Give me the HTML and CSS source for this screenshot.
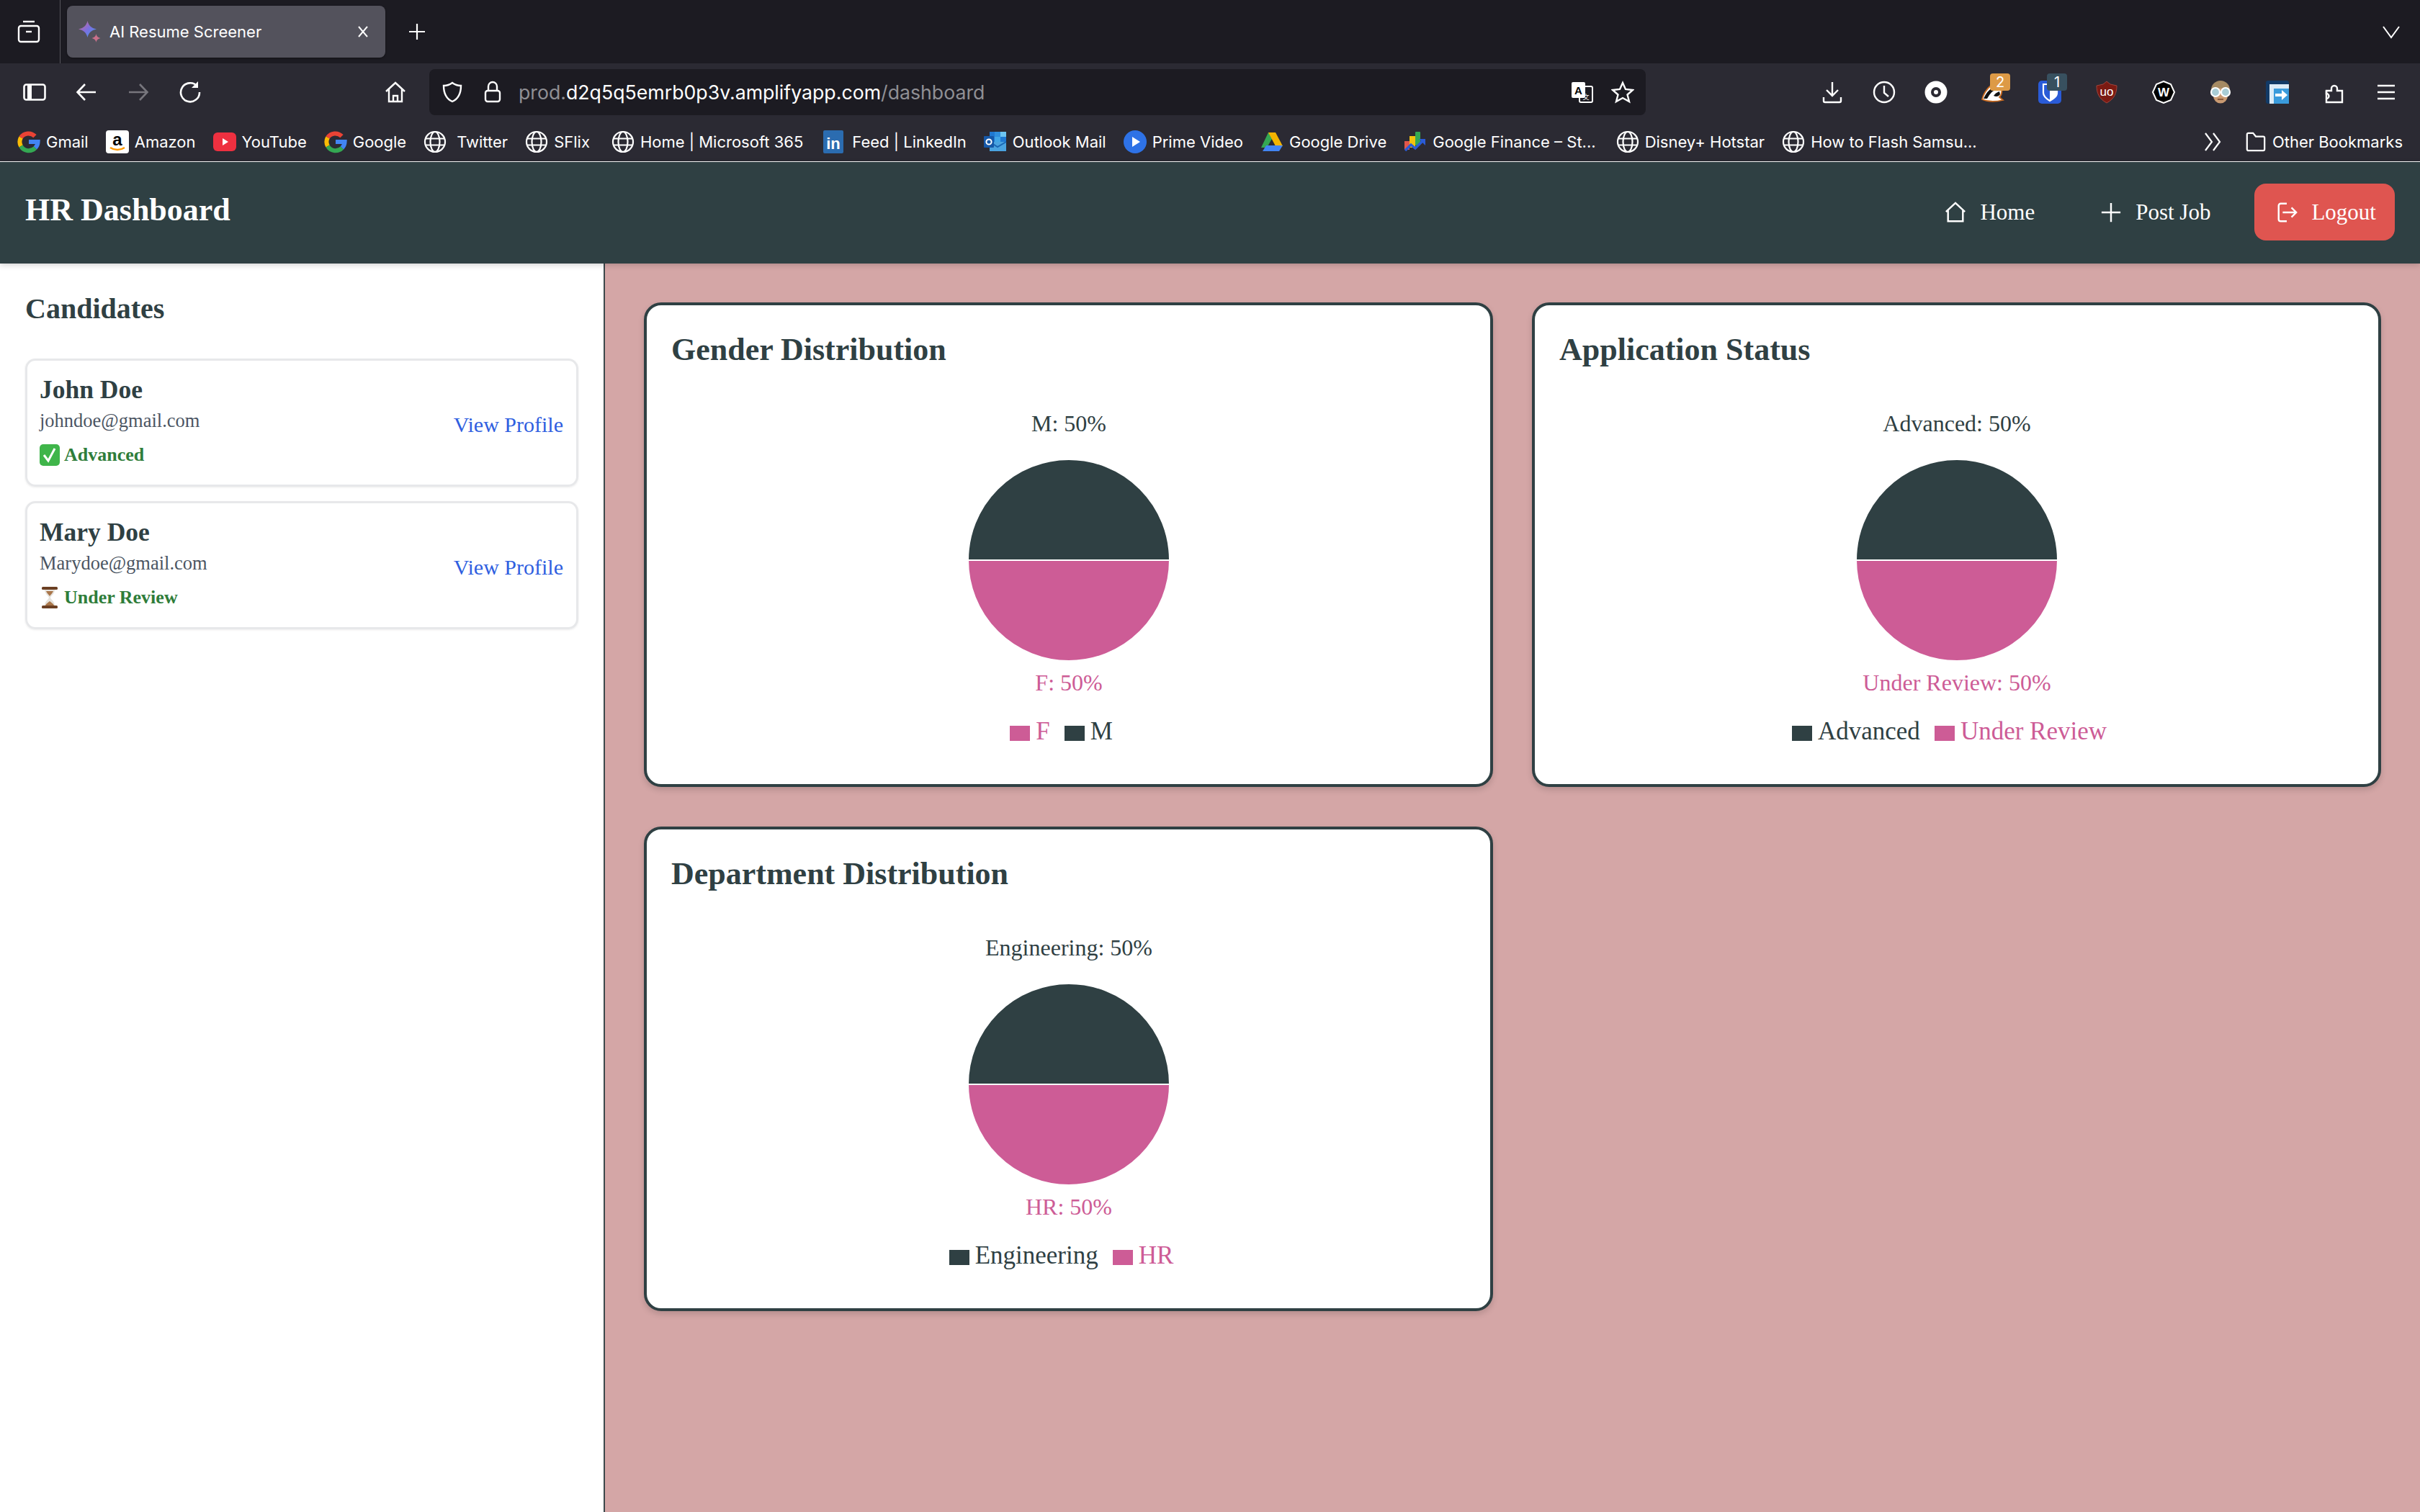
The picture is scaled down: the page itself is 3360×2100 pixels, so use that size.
FILE: index.html
```html
<!DOCTYPE html>
<html lang="en">
<head>
    <meta charset="UTF-8">
    <title>AI Resume Screener</title>
    <link rel="stylesheet" href="styles.css">
</head>
<body>
    <!-- Shared icons -->
    <svg class="defs" width="0" height="0">
        <defs>
            <symbol id="globe" viewBox="0 0 32 32">
                <g fill="none" stroke="#fff" stroke-width="2.2">
                    <circle cx="16" cy="16" r="14"/>
                    <ellipse cx="16" cy="16" rx="6.5" ry="14"/>
                    <path d="M2 11.5h28M2 20.5h28"/>
                </g>
            </symbol>
            <symbol id="google" viewBox="0 0 32 32">
                <g fill="none" stroke-width="6">
                    <path d="M24.5 8.2A12.6 12.6 0 0 0 5 10" stroke="#ea4335"/>
                    <path d="M5 10a12.6 12.6 0 0 0 0 12" stroke="#fbbc05"/>
                    <path d="M5 22a12.6 12.6 0 0 0 20 2.4" stroke="#34a853"/>
                    <path d="M25 24.4A12.6 12.6 0 0 0 28.6 16H16" stroke="#4285f4"/>
                </g>
            </symbol>
        </defs>
    </svg>

    <!-- Browser tab strip -->
    <div class="tabstrip">
        <svg class="tool tab-group" viewBox="0 0 32 32" fill="none" stroke="#fff" stroke-width="2.4"><path d="M8 2h16"/><rect x="2" y="8" width="28" height="22" rx="3"/><path d="M12 16h8"/></svg>
        <div class="tab-sep"></div>
        <div class="tab">
            <svg class="tab-icon" viewBox="0 0 31 30">
                <defs><linearGradient id="spark" x1="0" y1="0" x2="1" y2="1"><stop offset="0" stop-color="#d9687e"/><stop offset=".5" stop-color="#7c6fe0"/><stop offset="1" stop-color="#3f9bea"/></linearGradient></defs>
                <path d="M12.500 0c1.500 6 5 10 12.500 11.500C17.500 13 14 17 12.500 23 11 17 7.500 13 0 11.500 7.500 10 11 6 12.500 0z" fill="url(#spark)"/>
                <path d="M24.500 18c.7 3.200 2 5 6 6-4 1-5.300 2.800-6 6-.7-3.200-2-5-6-6 4-1 5.300-2.800 6-6z" fill="#c9708a"/>
            </svg>
            <span class="tab-title">AI Resume Screener</span>
            <svg class="tab-close" viewBox="0 0 20 20" fill="none" stroke="#fff" stroke-width="2"><path d="M4 3l12 14M16 3L4 17"/></svg>
        </div>
        <svg class="new-tab" viewBox="0 0 24 24" fill="none" stroke="#fff" stroke-width="2.200"><path d="M12 1v22M1 12h22"/></svg>
        <svg class="tabs-menu" viewBox="0 0 24 24" fill="none" stroke="#fff" stroke-width="2"><path d="M1 5l11 15L23 5"/></svg>
    </div>

    <!-- Browser toolbar -->
    <div class="toolbar">
        <div class="tool-group">
            <svg class="tool" viewBox="0 0 32 32" fill="none" stroke="#fff" stroke-width="2.600"><rect x="1.500" y="5.500" width="29" height="21" rx="3"/><path d="M9 5v22" stroke-width="6"/></svg>
            <svg class="tool" viewBox="0 0 32 32" fill="none" stroke="#fff" stroke-width="2.600"><path d="M29 16H4M14 5L3.500 16 14 27"/></svg>
            <svg class="tool" viewBox="0 0 32 32" fill="none" stroke="#77767d" stroke-width="2.600"><path d="M3 16h25M18 5l10.500 11L18 27"/></svg>
            <svg class="tool" viewBox="0 0 32 32" fill="none" stroke="#fff" stroke-width="2.600"><path d="M26 8a13 13 0 1 0 3 8"/><path d="M27 1v9h-9" fill="#fff" stroke="none"/></svg>
        </div>
        <svg class="tool home-tool" viewBox="0 0 32 32" fill="none" stroke="#fff" stroke-width="2.400"><path d="M3 15L16 3l13 12M7 12v17h18V12M13 29v-8h6v8"/></svg>
        <div class="urlbar">
            <svg class="tool shield" viewBox="0 0 32 32" fill="none" stroke="#fff" stroke-width="2.400"><path d="M16 3c4 3 8 4 12 4 0 10-3 18-12 22C7 25 4 17 4 7c4 0 8-1 12-4z"/></svg>
            <svg class="tool lock" viewBox="0 0 32 32" fill="none" stroke="#fff" stroke-width="2.400"><rect x="6" y="14" width="20" height="15" rx="3"/><path d="M10 14V8a6 6 0 0 1 12 0v6"/></svg>
            <span class="url"><span class="url-dim">prod.</span>d2q5q5emrb0p3v.amplifyapp.com<span class="url-dim">/dashboard</span></span>
            <svg class="tool translate" viewBox="0 0 32 32"><rect x="12" y="8" width="18" height="22" rx="2" fill="#1c1b22" stroke="#fff" stroke-width="2"/><rect x="1" y="2" width="19" height="22" rx="2" fill="#fff"/><text x="10.500" y="19" class="translate-a">A</text><text x="21" y="26" class="translate-b">文</text></svg>
            <svg class="tool star" viewBox="0 0 32 32" fill="none" stroke="#fff" stroke-width="2.400"><path d="M16 3l4 9 10 1-7.500 6.500L25 29l-9-5-9 5 2.500-9.500L2 13l10-1z"/></svg>
        </div>
        <div class="ext-group">
            <div class="tool-pack">
                <svg class="tool" viewBox="0 0 32 32" fill="none" stroke="#fff" stroke-width="2.400"><path d="M16 2v19M8 13l8 8 8-8M4 23v5a2 2 0 0 0 2 2h20a2 2 0 0 0 2-2v-5"/></svg>
                <svg class="tool" viewBox="0 0 32 32" fill="none" stroke="#fff" stroke-width="2.400"><circle cx="16" cy="16" r="14"/><path d="M16 7v10l6 5"/></svg>
                <svg class="tool" viewBox="0 0 32 32"><circle cx="16" cy="16" r="15.500" fill="#fff"/><circle cx="16" cy="16" r="5" fill="none" stroke="#2b2a33" stroke-width="4"/></svg>
            </div>
            <div class="ext">
                <svg class="tool" viewBox="0 0 32 32"><path d="M1 26C3 18 8 11 14 6l14 6c1 5-1 9-3 11l5 4c-8 2-20 3-29-1z" fill="#fff" stroke="#c96a1f" stroke-width="1.800"/><path d="M3 25C6 18 10 13 15 10l4 3c-5 2-8 7-11 12z" fill="#111"/><path d="M17 21c2-3 5-5 8-6l1 4c-2 3-5 4-9 2z" fill="#111"/></svg>
                <span class="ext-badge badge-orange">2</span>
            </div>
            <div class="ext">
                <svg class="tool" viewBox="0 0 32 32"><rect width="32" height="32" rx="5" fill="#2a5bd7"/><path d="M16 5h10v12c0 5-5 8-10 11z" fill="#fff"/><path d="M7 5h19v12c0 5-5 8-10 11C11 25 7 22 7 17z" fill="none" stroke="#fff" stroke-width="2.200"/></svg>
                <span class="ext-badge badge-slate">1</span>
            </div>
            <svg class="tool" viewBox="0 0 32 32"><path d="M16 1l5 4 9 2c0 10-3 18-14 24C5 25 2 17 2 7l9-2z" fill="#7b1a12" stroke="#a0443c"/><text x="16" y="21" class="ublock-text">uo</text></svg>
            <svg class="tool" viewBox="0 0 32 32"><path d="M16 1l10 4 5 11-5 11-10 4-10-4-5-11 5-11z" fill="#000" stroke="#fff" stroke-width="2"/><text x="16" y="22" class="wappalyzer-text">W</text></svg>
            <svg class="tool" viewBox="0 0 32 32"><circle cx="16" cy="13" r="13" fill="#a58a63"/><ellipse cx="16" cy="21" rx="10" ry="10.500" fill="#c99a72"/><path d="M12 26h8" stroke="#8a5c40" stroke-width="2"/><circle cx="9" cy="16" r="6" fill="#a9cdd6" stroke="#fff" stroke-width="2.200"/><circle cx="23" cy="16" r="6" fill="#a9cdd6" stroke="#fff" stroke-width="2.200"/></svg>
            <svg class="tool" viewBox="0 0 32 32"><rect width="32" height="32" rx="3" fill="#123a66"/><rect x="5" y="5" width="27" height="27" fill="#dcebf6"/><rect x="11" y="11" width="21" height="21" fill="#3a9bdc"/><path d="M13 18h9v-5l8 7-8 7v-5h-9z" fill="#fff"/></svg>
            <div class="tool-pack">
                <svg class="tool" viewBox="0 0 32 32" fill="none" stroke="#fff" stroke-width="2.400"><path d="M5 30V14h7v-3a4 4 0 1 1 8 0v3h7v16z"/><path d="M5 14v4a3 3 0 0 1 0 7"/></svg>
                <svg class="tool" viewBox="0 0 32 32" fill="none" stroke="#fff" stroke-width="2.600"><path d="M4 7h24M4 16h24M4 25h24"/></svg>
            </div>
        </div>
    </div>

    <!-- Bookmarks -->
    <div class="bookmarks">
        <a class="bookmark"><svg class="favicon"><use href="#google"/></svg>Gmail</a>
        <a class="bookmark"><svg class="favicon" viewBox="0 0 32 32"><rect width="32" height="32" rx="4" fill="#fff"/><text x="16" y="21" class="amazon-text">a</text><path d="M6 24c6 4 14 4 20 0" fill="none" stroke="#f90" stroke-width="2.500"/></svg>Amazon</a>
        <a class="bookmark"><svg class="favicon" viewBox="0 0 32 32"><rect y="3" width="32" height="26" rx="6" fill="#ee3040"/><path d="M13 11l8 5-8 5z" fill="#fff"/></svg>YouTube</a>
        <a class="bookmark"><svg class="favicon"><use href="#google"/></svg>Google</a>
        <a class="bookmark wide"><svg class="favicon"><use href="#globe"/></svg>Twitter</a>
        <a class="bookmark"><svg class="favicon"><use href="#globe"/></svg>SFlix</a>
        <a class="bookmark push-6"><svg class="favicon"><use href="#globe"/></svg>Home | Microsoft 365</a>
        <a class="bookmark push-4"><svg class="favicon" viewBox="0 0 32 32"><rect width="28" height="32" rx="2" fill="#2b6cb0"/><text x="14" y="26" class="linkedin-text">in</text></svg>Feed | LinkedIn</a>
        <a class="bookmark"><svg class="favicon" viewBox="0 0 32 32"><rect x="8" y="2" width="23" height="14" fill="#1f78d1"/><rect x="15" y="2" width="8" height="7" fill="#2f8fdc"/><rect x="23" y="2" width="8" height="7" fill="#6cc4f2"/><rect x="15" y="9" width="8" height="7" fill="#41a5e6"/><rect x="8" y="16" width="23" height="13" fill="#4aa3e0"/><path d="M8 16l11 7 12-7" fill="none" stroke="#1a66b3" stroke-width="2"/><rect x="0" y="8" width="14" height="16" rx="1" fill="#1658a8"/><circle cx="7" cy="16" r="3.600" fill="none" stroke="#fff" stroke-width="2"/></svg>Outlook Mail</a>
        <a class="bookmark"><svg class="favicon" viewBox="0 0 32 32"><circle cx="16" cy="16" r="16" fill="#2e72e6"/><path d="M12 9l11 7-11 7z" fill="#fff"/></svg>Prime Video</a>
        <a class="bookmark"><svg class="favicon" viewBox="0 0 32 32"><path d="M11 3h10L9 24H1z" fill="#34a853"/><path d="M21 3l10 19H21L11 3z" fill="#f4b400"/><path d="M8 21h23l-5 8H3z" fill="#4285f4"/></svg>Google Drive</a>
        <a class="bookmark"><svg class="favicon" viewBox="0 0 32 32"><rect x="1" y="15" width="7" height="12" fill="#e2574c"/><rect x="8" y="8" width="8" height="16" fill="#f4c20d"/><rect x="16" y="2" width="7" height="19" rx="1" fill="#34a853"/><path d="M2 28l8-8 6 5 10-10" fill="none" stroke="#2a5bd7" stroke-width="3.500"/><path d="M21 12h9v9z" fill="#2a5bd7"/></svg>Google Finance – St...</a>
        <a class="bookmark push-4"><svg class="favicon"><use href="#globe"/></svg>Disney+ Hotstar</a>
        <a class="bookmark"><svg class="favicon"><use href="#globe"/></svg>How to Flash Samsu...</a>
        <div class="bookmarks-end">
            <svg class="chevrons" viewBox="0 0 28 28" fill="none" stroke="#fff" stroke-width="2.200"><path d="M3 2l9 12-9 12M14 2l9 12-9 12"/></svg>
            <a class="bookmark"><svg class="folder" viewBox="0 0 32 32" fill="none" stroke="#fff" stroke-width="2.400"><path d="M3 27V5a2 2 0 0 1 2-2h7l4 5h11a2 2 0 0 1 2 2v17a2 2 0 0 1-2 2H5a2 2 0 0 1-2-2z"/></svg>Other Bookmarks</a>
        </div>
    </div>

    <!-- Navbar -->
    <nav class="navbar">
        <div class="brand">HR Dashboard</div>
        <div class="nav-links">
            <a class="nav-link nav-home"><svg class="nav-icon" viewBox="0 0 32 32" fill="none" stroke="#fff" stroke-width="2.600"><path d="M2 15L16 2l14 13M5 13v16h22V13"/></svg>Home</a>
            <a class="nav-link nav-post"><svg class="nav-icon" viewBox="0 0 32 32" fill="none" stroke="#fff" stroke-width="2.600"><path d="M16 2v28M2 16h28"/></svg>Post Job</a>
            <a class="nav-link logout"><svg class="nav-icon" viewBox="0 0 32 32" fill="none" stroke="#fff" stroke-width="2.600"><path d="M16 3H7a3 3 0 0 0-3 3v20a3 3 0 0 0 3 3h9M10 16h20M23 9l7 7-7 7"/></svg>Logout</a>
        </div>
    </nav>

    <div class="layout">
        <!-- Sidebar -->
        <aside class="sidebar">
            <h2 class="sidebar-title">Candidates</h2>
            <div class="candidate">
                <div class="candidate-info">
                    <div class="candidate-name">John Doe</div>
                    <div class="candidate-email">johndoe@gmail.com</div>
                    <div class="candidate-status">
                        <svg class="status-icon" viewBox="0 0 28 32"><rect x="0" y="1" width="28" height="30" rx="5" fill="#3fb54a"/><path d="M6 16l6 8 9-17" fill="none" stroke="#fff" stroke-width="3"/></svg>Advanced
                    </div>
                </div>
                <a class="view-link">View Profile</a>
            </div>
            <div class="candidate">
                <div class="candidate-info">
                    <div class="candidate-name">Mary Doe</div>
                    <div class="candidate-email">Marydoe@gmail.com</div>
                    <div class="candidate-status">
                        <svg class="status-icon" viewBox="0 0 28 32"><rect x="3" y="1" width="22" height="4" rx="1.500" fill="#6b3f22"/><rect x="3" y="27" width="22" height="4" rx="1.500" fill="#6b3f22"/><path d="M7 5h14c0 6-5 8-6 11 1 3 6 5 6 11H7c0-6 5-8 6-11-1-3-6-5-6-11z" fill="#e6e3dd"/><path d="M9 7h10c-1 3-4 5-5 7-1-2-4-4-5-7zM8 27c1-3 4-4 6-6 2 2 5 3 6 6z" fill="#a9764a"/></svg>Under Review
                    </div>
                </div>
                <a class="view-link">View Profile</a>
            </div>
        </aside>

        <!-- Charts -->
        <main class="charts">
            <section class="chart-card">
                <h3 class="chart-title">Gender Distribution</h3>
                <svg class="pie" viewBox="0 0 800 440">
                    <text x="400" y="59" class="pie-label dark-text">M: 50%</text>
                    <path d="M260 238a140 140 0 0 1 280 0z" class="slice-dark"/>
                    <path d="M260 238a140 140 0 0 0 280 0z" class="slice-pink"/>
                    <text x="400" y="419" class="pie-label pink-text">F: 50%</text>
                </svg>
                <div class="legend">
                    <span class="legend-item pink-fill"><span class="swatch swatch-pink"></span>F</span>
                    <span class="legend-item dark-fill"><span class="swatch swatch-dark"></span>M</span>
                </div>
            </section>
            <section class="chart-card">
                <h3 class="chart-title">Application Status</h3>
                <svg class="pie" viewBox="0 0 800 440">
                    <text x="400" y="59" class="pie-label dark-text">Advanced: 50%</text>
                    <path d="M260 238a140 140 0 0 1 280 0z" class="slice-dark"/>
                    <path d="M260 238a140 140 0 0 0 280 0z" class="slice-pink"/>
                    <text x="400" y="419" class="pie-label pink-text">Under Review: 50%</text>
                </svg>
                <div class="legend">
                    <span class="legend-item dark-fill"><span class="swatch swatch-dark"></span>Advanced</span>
                    <span class="legend-item pink-fill"><span class="swatch swatch-pink"></span>Under Review</span>
                </div>
            </section>
            <section class="chart-card">
                <h3 class="chart-title">Department Distribution</h3>
                <svg class="pie" viewBox="0 0 800 440">
                    <text x="400" y="59" class="pie-label dark-text">Engineering: 50%</text>
                    <path d="M260 238a140 140 0 0 1 280 0z" class="slice-dark"/>
                    <path d="M260 238a140 140 0 0 0 280 0z" class="slice-pink"/>
                    <text x="400" y="419" class="pie-label pink-text">HR: 50%</text>
                </svg>
                <div class="legend">
                    <span class="legend-item dark-fill"><span class="swatch swatch-dark"></span>Engineering</span>
                    <span class="legend-item pink-fill"><span class="swatch swatch-pink"></span>HR</span>
                </div>
            </section>
        </main>
    </div>
</body>
</html>
```

FILE: styles.css
```css
/* Global */
body {
    margin: 0;
    width: 3360px;
    height: 2100px;
    overflow: hidden;
    display: flex;
    flex-direction: column;
    font-family: "Liberation Serif", "Times New Roman", serif;
    background-color: #fff;
}

.defs {
    position: absolute;
}

/* Browser chrome */
.tabstrip {
    height: 88px;
    flex: none;
    display: flex;
    align-items: center;
    background-color: #1c1b22;
    font-family: Inter, "Liberation Sans", sans-serif;
    color: #fff;
}

.tool {
    width: 32px;
    height: 32px;
    flex: none;
}

.tab-group {
    margin-left: 24px;
}

.tab-sep {
    width: 1px;
    height: 88px;
    margin-left: 27px;
    background-color: #55545c;
}

.tab {
    width: 442px;
    height: 72px;
    margin-left: 9px;
    display: flex;
    align-items: center;
    box-sizing: border-box;
    padding: 0 21px 0 16px;
    border-radius: 8px;
    background-color: #53525c;
    box-shadow: 0 1px 3px rgba(0, 0, 0, 0.4);
}

.tab-icon {
    width: 31px;
    height: 30px;
    flex: none;
}

.tab-title {
    flex: 1;
    margin-left: 12px;
    font-size: 22px;
}

.tab-close {
    width: 20px;
    height: 20px;
}

.new-tab {
    width: 24px;
    height: 24px;
    margin-left: 32px;
}

.tabs-menu {
    width: 24px;
    height: 24px;
    margin-left: auto;
    margin-right: 28px;
}

.toolbar {
    height: 72px;
    flex: none;
    display: flex;
    align-items: center;
    box-sizing: border-box;
    padding-top: 8px;
    background-color: #2b2a33;
    color: #fff;
    font-family: Inter, "Liberation Sans", sans-serif;
}

.tool-group {
    display: flex;
    gap: 40px;
    margin-left: 32px;
}

.home-tool {
    margin-left: 253px;
}

.urlbar {
    width: 1689px;
    height: 64px;
    margin-left: 31px;
    display: flex;
    align-items: center;
    box-sizing: border-box;
    border-radius: 8px;
    background-color: #1c1b22;
}

.shield {
    margin-left: 16px;
}

.lock {
    margin-left: 24px;
}

.url {
    margin-left: 20px;
    font-size: 26.7px;
    white-space: nowrap;
}

.url-dim {
    color: #8f8f94;
}

.translate {
    margin-left: auto;
}

.translate-a {
    font-family: "Liberation Sans", sans-serif;
    font-size: 15px;
    font-weight: 700;
    text-anchor: middle;
}

.translate-b {
    font-family: "Noto Sans CJK SC", sans-serif;
    font-size: 9px;
    fill: #fff;
    text-anchor: middle;
}

.star {
    margin: 0 16px 0 24px;
}

.ext-group {
    display: flex;
    align-items: center;
    gap: 47px;
    margin-left: 243px;
}

.tool-pack {
    display: flex;
    align-items: center;
    gap: 40px;
}

.ext {
    position: relative;
    display: flex;
}

.ext-badge {
    position: absolute;
    top: -10px;
    left: 12px;
    width: 28px;
    height: 24px;
    border-radius: 4px;
    font-size: 20px;
    line-height: 24px;
    text-align: center;
    color: #fff;
}

.badge-orange {
    background-color: #dd9a46;
}

.badge-slate {
    background-color: #38505f;
}

.ublock-text {
    font-family: "Liberation Sans", sans-serif;
    font-size: 17px;
    fill: #fff;
    text-anchor: middle;
}

.wappalyzer-text {
    font-family: "Liberation Sans", sans-serif;
    font-size: 17px;
    font-weight: 700;
    fill: #fff;
    text-anchor: middle;
}

/* Bookmarks */
.bookmarks {
    height: 64px;
    flex: none;
    display: flex;
    align-items: center;
    gap: 24px;
    padding: 10px 24px 0;
    box-sizing: border-box;
    background-color: #2b2a33;
    color: #fff;
    font-family: Inter, "Liberation Sans", sans-serif;
    font-size: 22px;
    white-space: nowrap;
}

.bookmark {
    display: flex;
    align-items: center;
    gap: 8px;
}

.wide {
    gap: 14px;
}

.push-6 {
    margin-left: 6px;
}

.push-4 {
    margin-left: 4px;
}

.favicon {
    width: 32px;
    height: 32px;
    flex: none;
}

.amazon-text {
    font-family: "Liberation Sans", sans-serif;
    font-size: 24px;
    font-weight: 700;
    text-anchor: middle;
}

.linkedin-text {
    font-family: "Liberation Sans", sans-serif;
    font-size: 22px;
    font-weight: 700;
    fill: #fff;
    text-anchor: middle;
}

.bookmarks-end {
    margin-left: auto;
    display: flex;
    align-items: center;
    gap: 30px;
}

.chevrons {
    width: 28px;
    height: 28px;
}

.folder {
    width: 30px;
    height: 30px;
}

/* Navbar */
.navbar {
    height: 141px;
    margin-top: 1px;
    flex: none;
    display: flex;
    align-items: center;
    justify-content: space-between;
    padding: 0 35px;
    box-sizing: border-box;
    background-color: #2f4043;
    color: #fff;
    position: relative;
    box-shadow: 0 2px 8px rgba(0, 0, 0, 0.18);
}

.brand {
    margin-bottom: 8px;
    font-size: 44px;
    font-weight: 700;
}

.nav-links {
    display: flex;
    align-items: center;
    margin-bottom: 2px;
}

.nav-link {
    display: flex;
    align-items: center;
    gap: 19px;
    font-size: 31px;
}

.nav-post {
    margin-left: 91px;
}

.logout {
    margin-left: 61px;
    height: 79px;
    padding: 0 26px 0 30px;
    border-radius: 16px;
    background-color: #df5550;
}

.nav-icon {
    width: 30px;
    height: 30px;
}

/* Sidebar */
.layout {
    flex: 1;
    display: flex;
    min-height: 0;
}

.sidebar {
    width: 840px;
    flex: none;
    box-sizing: border-box;
    padding: 36px 35px 0;
    border-right: 2px solid #3b484b;
    background-color: #fff;
}

.sidebar-title {
    margin: 0 0 42px;
    font-size: 40px;
    line-height: 54px;
    color: #2f4043;
}

.candidate {
    height: 178px;
    margin: 0 0 20px;
    box-sizing: border-box;
    display: flex;
    align-items: center;
    justify-content: space-between;
    padding: 0 18px 0 17px;
    border: 3px solid #e7e8ea;
    border-radius: 14px;
    box-shadow: 0 1px 3px rgba(0, 0, 0, 0.08);
}

.candidate-info {
    margin-bottom: 4px;
}

.candidate-name {
    font-size: 35.5px;
    font-weight: 700;
    line-height: 46px;
    color: #2f4043;
}

.candidate-email {
    font-size: 26.5px;
    line-height: 40px;
    color: #4b5563;
}

.candidate-status {
    margin-top: 8px;
    display: flex;
    align-items: center;
    gap: 6px;
    font-size: 26px;
    font-weight: 700;
    line-height: 40px;
    color: #2f7d3a;
}

.status-icon {
    width: 28px;
    height: 32px;
}

.view-link {
    margin-top: 6px;
    font-size: 30px;
    color: #2f5fe0;
}

/* Charts */
.charts {
    flex: 1;
    display: grid;
    grid-template-columns: 1fr 1fr;
    grid-auto-rows: 673px;
    gap: 55px 54px;
    padding: 54px;
    box-sizing: border-box;
    background-color: #d4a6a6;
}

.chart-card {
    box-sizing: border-box;
    padding: 32px 34px;
    border: 4px solid #2f4043;
    border-radius: 24px;
    background-color: #fff;
    box-shadow: 0 4px 8px rgba(0, 0, 0, 0.15);
}

.chart-title {
    margin: 0;
    font-size: 44px;
    line-height: 60px;
    color: #2f4043;
}

.pie {
    display: block;
    width: 800px;
    height: 440px;
    margin: 24px auto 0;
}

.pie-label {
    font-size: 32px;
    text-anchor: middle;
}

.dark-text {
    fill: #2f4043;
}

.pink-text {
    fill: #cd5c96;
}

.slice-dark {
    fill: #2f4043;
    stroke: #fff;
    stroke-width: 2;
}

.slice-pink {
    fill: #cd5c96;
    stroke: #fff;
    stroke-width: 2;
}

.legend {
    margin-top: 14px;
    padding-right: 20px;
    display: flex;
    justify-content: center;
    gap: 20px;
    font-size: 35px;
    line-height: 44px;
}

.legend-item {
    display: flex;
    align-items: center;
    gap: 8px;
}

.pink-fill {
    color: #cd5c96;
}

.dark-fill {
    color: #2f4043;
}

.swatch {
    width: 28px;
    height: 21px;
    margin-top: 4px;
}

.swatch-pink {
    background-color: #cd5c96;
}

.swatch-dark {
    background-color: #2f4043;
}
```
